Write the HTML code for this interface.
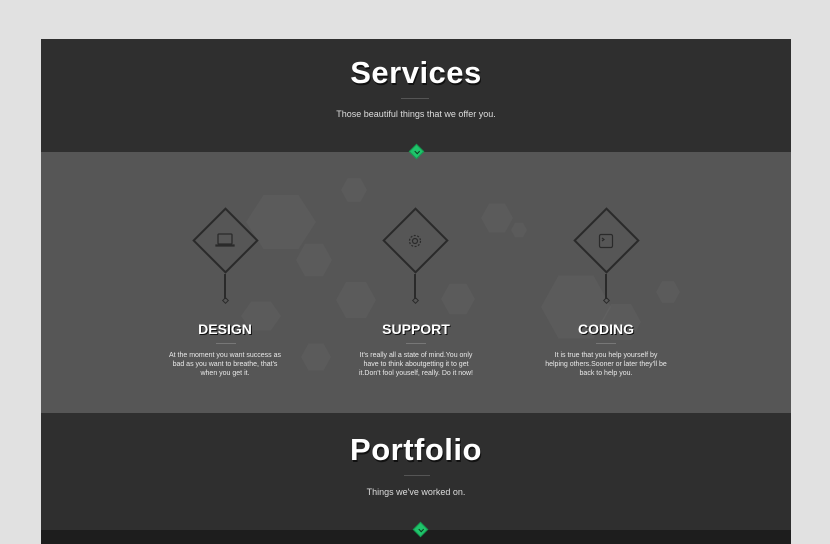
<!DOCTYPE html>
<html><head><meta charset="utf-8"><style>
*{margin:0;padding:0;box-sizing:border-box}
body{width:830px;height:544px;background:#e1e1e1;position:relative;overflow:hidden;font-family:"Liberation Sans",sans-serif}
.a{position:absolute}
.dark{background:#2f2f2f}
h1{position:absolute;left:0;width:750px;text-align:center;color:#fff;font-size:31px;font-weight:bold;text-shadow:1px 2px 0 #111;letter-spacing:0.5px}
.sub{position:absolute;left:0;width:750px;text-align:center;color:#ddd;font-size:9px}
.hr{position:absolute;height:1px;background:#555}
.gem{position:absolute;width:11px;height:11px;background:#1fc46b;transform:rotate(45deg);border:1px solid #159a50}
.gem:after{content:"";position:absolute;left:3px;top:2px;width:3px;height:3px;border-right:1.5px solid #103a20;border-bottom:1.5px solid #103a20}
.hex{position:absolute;background:rgba(255,255,255,0.03);clip-path:polygon(25% 5%,75% 5%,100% 50%,75% 95%,25% 95%,0 50%)}
.dia{position:absolute;width:47px;height:47px;border:2px solid #2a2a2a;transform:rotate(45deg)}
.ln{position:absolute;width:2px;background:#2a2a2a}
.sm{position:absolute;width:5px;height:5px;border:1px solid #2a2a2a;transform:rotate(45deg)}
.t{position:absolute;width:190px;text-align:center;color:#fff;font-weight:bold;font-size:14px;text-shadow:1px 1px 0 #111}
.p{position:absolute;width:122px;text-align:center;color:#e8e8e8;font-size:7px;line-height:9px}
</style></head><body>
<div class="a dark" style="left:41px;top:39px;width:750px;height:113px">
<h1 style="top:16px">Services</h1>
<div class="hr" style="left:360px;top:59px;width:28px"></div>
<div class="sub" style="top:70px">Those beautiful things that we offer you.</div>
</div>
<div class="a" style="left:41px;top:152px;width:750px;height:261px;background:#565656;overflow:hidden">
<div class="hex" style="left:205px;top:40px;width:70px;height:60px"></div>
<div class="hex" style="left:300px;top:25px;width:26px;height:26px"></div>
<div class="hex" style="left:255px;top:90px;width:36px;height:36px"></div>
<div class="hex" style="left:440px;top:50px;width:32px;height:32px"></div>
<div class="hex" style="left:470px;top:70px;width:16px;height:16px"></div>
<div class="hex" style="left:295px;top:128px;width:40px;height:40px"></div>
<div class="hex" style="left:400px;top:130px;width:34px;height:34px"></div>
<div class="hex" style="left:500px;top:120px;width:70px;height:70px"></div>
<div class="hex" style="left:560px;top:150px;width:40px;height:40px"></div>
<div class="hex" style="left:615px;top:128px;width:24px;height:24px"></div>
<div class="hex" style="left:200px;top:148px;width:40px;height:32px"></div>
<div class="hex" style="left:260px;top:190px;width:30px;height:30px"></div>
</div>
<div class="gem" style="left:411px;top:146px"></div>
<div class="dia" style="left:202px;top:217px"></div><div class="ln" style="left:224px;top:274px;height:25px"></div><div class="sm" style="left:223px;top:298px"></div>
<svg class="a" style="left:215px;top:232px" width="20" height="16" viewBox="0 0 20 16" fill="none" stroke="#2a2a2a" stroke-width="1.3"><rect x="3" y="2" width="14" height="10" rx="1"/><path d="M1 13h18v1H1z"/></svg>
<div class="dia" style="left:392px;top:217px"></div><div class="ln" style="left:414px;top:274px;height:25px"></div><div class="sm" style="left:413px;top:298px"></div>
<svg class="a" style="left:407px;top:233px" width="16" height="16" viewBox="0 0 16 16" fill="none" stroke="#2a2a2a" stroke-width="1.2"><circle cx="8" cy="8" r="2.5"/><circle cx="8" cy="8" r="5.5" stroke-dasharray="2 1.5"/></svg>
<div class="dia" style="left:583px;top:217px"></div><div class="ln" style="left:605px;top:274px;height:25px"></div><div class="sm" style="left:604px;top:298px"></div>
<svg class="a" style="left:598px;top:233px" width="16" height="16" viewBox="0 0 16 16" fill="none" stroke="#2a2a2a" stroke-width="1.2"><rect x="1.5" y="1.5" width="13" height="13" rx="1.5"/><path d="M4 5l2 1.5L4 8"/></svg>
<div class="t" style="left:130px;top:321px">DESIGN</div><div class="hr" style="left:216px;top:343px;width:20px;background:#777"></div>
<div class="p" style="left:164px;top:351px">At the moment you want success as bad as you want to breathe, that's when you get it.</div>
<div class="t" style="left:321px;top:321px">SUPPORT</div><div class="hr" style="left:406px;top:343px;width:20px;background:#777"></div>
<div class="p" style="left:355px;top:351px">It's really all a state of mind.You only have to think aboutgetting it to get it.Don't fool youself, really. Do it now!</div>
<div class="t" style="left:511px;top:321px">CODING</div><div class="hr" style="left:596px;top:343px;width:20px;background:#777"></div>
<div class="p" style="left:545px;top:351px">It is true that you help yourself by helping others.Sooner or later they'll be back to help you.</div>
<div class="a dark" style="left:41px;top:413px;width:750px;height:117px">
<h1 style="top:19px">Portfolio</h1>
<div class="hr" style="left:363px;top:62px;width:26px"></div>
<div class="sub" style="top:74px">Things we've worked on.</div>
</div>
<div class="a" style="left:41px;top:530px;width:750px;height:14px;background:#1d1d1d"></div>
<div class="gem" style="left:415px;top:524px"></div>
</body></html>
